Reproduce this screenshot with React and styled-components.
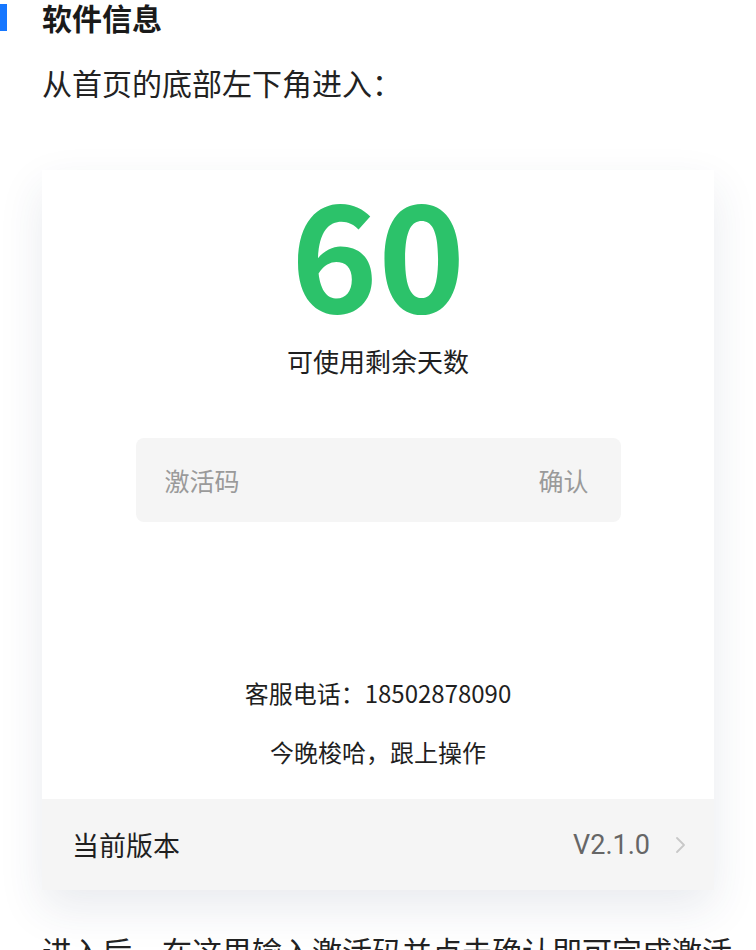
import React from 'react';
import styled, { createGlobalStyle } from 'styled-components';

const GlobalStyle = createGlobalStyle`
  html, body {
    margin: 0;
    padding: 0;
    background: #fff;
  }
  body {
    font-family: "Noto Sans CJK SC", "Noto Sans", sans-serif;
    color: #222;
  }
`

const App = () => {
  return (
    <Page>
      <GlobalStyle />
      <SectionTitle>软件信息</SectionTitle>
      <Paragraph gap={28}>从首页的底部左下角进入：</Paragraph>
      <Card>
        <CardBody>
          <Days>60</Days>
          <DaysLabel>可使用剩余天数</DaysLabel>
          <CodeBox>
            <CodeInput placeholder="激活码" />
            <ConfirmButton>确认</ConfirmButton>
          </CodeBox>
          <InfoLine spacing={157}>客服电话：18502878090</InfoLine>
          <InfoLine spacing={31}>今晚梭哈，跟上操作</InfoLine>
        </CardBody>
        <VersionRow>
          <VersionLabel>当前版本</VersionLabel>
          <VersionValue>
            V2.1.0
            <Chevron viewBox="0 0 12 20" width="12" height="20">
              <path d="M3 3l7 7-7 7" fill="none" stroke="#c8c8c8" strokeWidth="1.8" strokeLinecap="round" strokeLinejoin="round" />
            </Chevron>
          </VersionValue>
        </VersionRow>
      </Card>
      <Paragraph gap={40}>进入后，在这里输入激活码并点击确认即可完成激活。</Paragraph>
    </Page>
  )
}

const Page = styled.div`
  width: 756px;
  height: 950px;
  overflow: hidden;
  box-sizing: border-box;
`
const SectionTitle = styled.h2`
  position: relative;
  margin: 0;
  padding-left: 42px;
  font-size: 30px;
  line-height: 34px;
  font-weight: 700;
  color: #1a1a1a;
  &::before {
    content: "";
    position: absolute;
    left: 0;
    top: 4px;
    width: 7px;
    height: 27px;
    background: #1677ff;
  }
`
const Paragraph = styled.p`
  margin: ${p => p.gap}px 0 0;
  padding: 0 42px;
  font-size: 30px;
  line-height: 40px;
  color: #222;
  white-space: nowrap;
`
const Card = styled.div`
  margin: 68px 42px 0;
  background: #fff;
  box-shadow: 0 18px 42px rgba(40, 55, 100, 0.1);
  display: flex;
  flex-direction: column;
`
const CardBody = styled.div`
  display: flex;
  flex-direction: column;
  align-items: center;
  padding: 5px 0 33px;
`
const Days = styled.div`
  font-weight: 700;
  font-size: 148px;
  line-height: 148px;
  color: #2cc26a;
`
const DaysLabel = styled.div`
  margin-top: 20px;
  font-size: 26px;
  line-height: 36px;
  color: #1f1f1f;
`
const CodeBox = styled.div`
  margin-top: 59px;
  width: 485px;
  height: 84px;
  box-sizing: border-box;
  padding: 0 32px 0 29px;
  background: #f5f5f5;
  border-radius: 8px;
  display: flex;
  align-items: center;
  justify-content: space-between;
`
const CodeInput = styled.input`
  border: none;
  outline: none;
  background: transparent;
  font-family: inherit;
  font-size: 25px;
  color: #333;
  width: 300px;
  padding: 0;
  &::placeholder {
    color: #9a9a9a;
  }
`
const ConfirmButton = styled.span`
  font-size: 25px;
  color: #9a9a9a;
`
const InfoLine = styled.div`
  margin-top: ${p => p.spacing}px;
  font-size: 24px;
  line-height: 28px;
  color: #1f1f1f;
`
const VersionRow = styled.div`
  height: 91px;
  background: #f5f5f5;
  display: flex;
  align-items: center;
  justify-content: space-between;
  padding: 0 28px 0 30px;
`
const VersionLabel = styled.span`
  font-size: 27px;
  color: #1f1f1f;
`
const VersionValue = styled.span`
  display: flex;
  align-items: center;
  gap: 24px;
  font-family: "Roboto", "Noto Sans", sans-serif;
  font-size: 27px;
  color: #666;
`
const Chevron = styled.svg`
  display: block;
`

export default App;
